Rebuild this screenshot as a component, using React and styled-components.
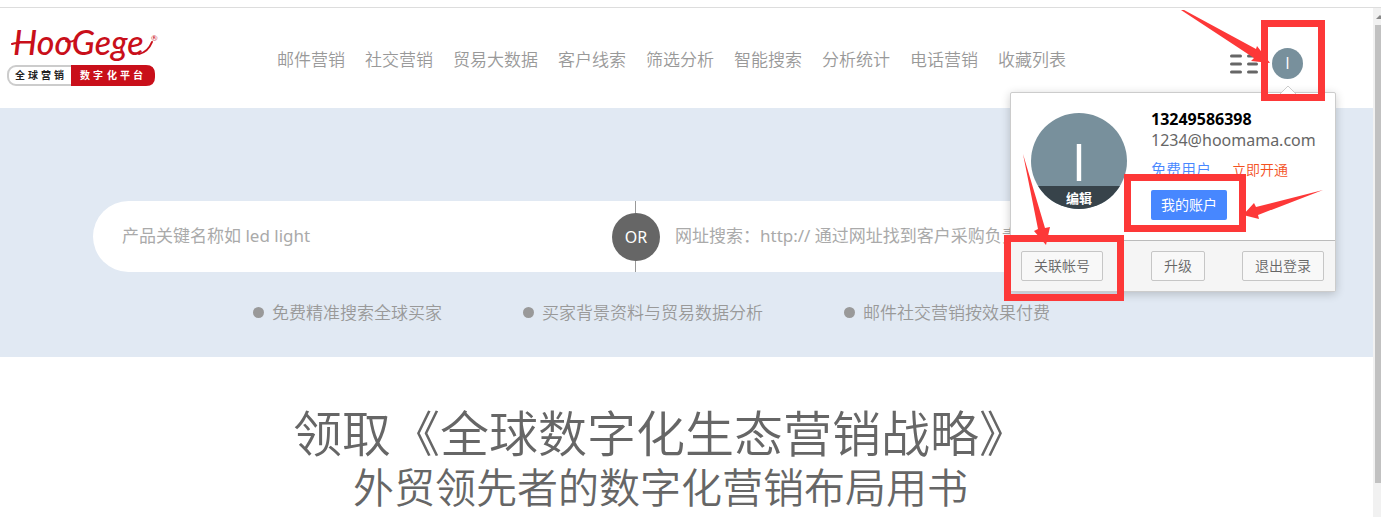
import React from 'react';
import styled, { createGlobalStyle } from 'styled-components';

const GlobalStyle = createGlobalStyle`
  * {
    box-sizing: border-box;
  }
  body {
    margin: 0;
    background: #fff;
    color: #666;
    font-family: 'Noto Sans', 'Noto Sans CJK SC', sans-serif;
    font-weight: 400;
  }
  button,
  input {
    font: inherit;
  }
  a {
    text-decoration: none;
  }
`;

const Page = styled.div`
  min-height: 100vh;
  padding-top: 7px;
  display: flex;
  flex-direction: column;
  overflow: hidden;
`;
const Screen = styled.div`
  flex: 1;
  display: flex;
  border-top: 1px solid #ddd;
`;
const Content = styled.div`
  flex: 1;
  min-width: 0;
`;

const Header = styled.header`
  height: 100px;
  padding: 0 70px 0 7px;
  display: flex;
  align-items: center;
`;
const LogoLink = styled.a`
  display: block;
  height: 80px;
`;
const Nav = styled.nav`
  margin-left: 113px;
  padding-top: 3px;
  display: flex;
  gap: 20px;
`;
const NavLink = styled.a`
  color: #999;
  font-size: 17px;
  font-weight: 350;
  line-height: 24px;
  white-space: nowrap;
`;
const Tools = styled.div`
  margin-left: auto;
  padding-top: 11px;
  display: flex;
  align-items: center;
  gap: 14px;
`;
const MenuButton = styled.button`
  display: flex;
  padding: 0;
  border: 0;
  background: none;
  cursor: pointer;
`;
const User = styled.div`
  position: relative;
  z-index: 2;
`;
const AvatarButton = styled.button`
  display: block;
  width: 31px;
  height: 31px;
  padding: 0;
  border: 0;
  border-radius: 50%;
  background: #78909c;
  color: #fff;
  font-family: 'Open Sans', sans-serif;
  font-size: 16px;
  line-height: 31px;
  cursor: pointer;
`;

const Popup = styled.div`
  position: absolute;
  top: 44px;
  right: -33px;
  width: 326px;
  border: 1px solid #ccc;
  border-radius: 2px;
  background: #fff;
  box-shadow: 0 2px 10px rgba(0, 0, 0, 0.2);
`;
const Caret = styled.svg`
  position: absolute;
  top: -8px;
  right: 39px;
`;
const Profile = styled.div`
  padding: 20px 20px 20px;
  display: flex;
  gap: 24px;
`;
const Portrait = styled.div`
  flex: none;
  width: 96px;
  height: 96px;
  border-radius: 50%;
  overflow: hidden;
  display: flex;
  flex-direction: column;
  background: #78909c;
  color: #fff;
  text-align: center;
`;
const Initial = styled.span`
  height: 73px;
  padding-top: 22px;
  font-family: 'Open Sans', sans-serif;
  font-size: 52px;
  line-height: 51px;
`;
const EditButton = styled.button`
  height: 23px;
  padding: 0;
  border: 0;
  background: #37434a;
  color: #fff;
  font-size: 13px;
  font-weight: 700;
  line-height: 22px;
  cursor: pointer;
`;
const Info = styled.div`
  display: flex;
  flex-direction: column;
  align-items: flex-start;
`;
const Phone = styled.strong`
  color: #000;
  font-size: 16px;
  font-weight: 700;
  line-height: 12px;
`;
const Email = styled.span`
  margin-top: 9px;
  font-size: 16px;
  line-height: 12px;
`;
const Plan = styled.div`
  margin-top: 13px;
  display: flex;
  gap: 21px;
  line-height: 21px;
`;
const FreePlan = styled.span`
  color: #4787ff;
  font-size: 15px;
  font-weight: 350;
`;
const OpenLink = styled.a`
  color: #f4511e;
  font-size: 14px;
  font-weight: 350;
`;
const AccountButton = styled.button`
  height: 30px;
  margin-top: 10px;
  padding: 0 10px 2px;
  border: 0;
  border-radius: 2px;
  background: #4787ff;
  color: #fff;
  font-size: 14px;
  cursor: pointer;
`;
const PopupFooter = styled.div`
  padding: 10px 11px 10px 10px;
  display: grid;
  grid-template-columns: 130px auto 1fr;
  justify-items: start;
  border-top: 1px solid #bbb;
  background: #f5f5f5;
`;
const FooterButton = styled.button`
  height: 30px;
  padding: 0 12px 2px;
  justify-self: ${(props) => (props.$end ? 'end' : 'start')};
  border: 1px solid #c6c6c6;
  border-radius: 2px;
  background: #f8f8f8;
  color: #666;
  font-size: 14px;
  font-weight: 350;
  cursor: pointer;
`;
const Marks = styled.svg`
  position: absolute;
  top: -40px;
  right: -24px;
  pointer-events: none;
`;

const Hero = styled.section`
  padding: 93px 144px 32px 93px;
  background: #e1e9f3;
`;
const SearchBar = styled.form`
  height: 71px;
  display: grid;
  grid-template-columns: 542px 1fr;
  border-radius: 36px;
  background: #fff;
`;
const Field = styled.div`
  position: relative;
  display: flex;
  padding-left: ${(props) => (props.$second ? '39px' : '29px')};
  border-left: ${(props) => (props.$second ? '1px solid #999' : '0')};
`;
const SearchInput = styled.input`
  flex: 1;
  min-width: 0;
  padding: 0 0 2px;
  border: 0;
  outline: 0;
  background: none;
  color: #666;
  font-size: 17px;
  &::placeholder {
    color: #aaa;
    opacity: 1;
  }
`;
const Or = styled.span`
  position: absolute;
  top: 12px;
  left: -24px;
  width: 48px;
  height: 48px;
  border-radius: 50%;
  background: #666;
  color: #fff;
  font-size: 16px;
  line-height: 48px;
  text-align: center;
`;
const Features = styled.ul`
  margin: 28px 0 0;
  padding: 0 0 0 160px;
  display: flex;
  gap: 81px;
  list-style: none;
`;
const Feature = styled.li`
  display: flex;
  align-items: center;
  gap: 8px;
  color: #999;
  font-size: 17px;
  font-weight: 350;
  line-height: 25px;
  white-space: nowrap;
  &::before {
    content: '';
    width: 11px;
    height: 11px;
    border-radius: 50%;
    background: #999;
  }
`;

const Offer = styled.section`
  padding: 49px 52px 0 0;
  text-align: center;
`;
const Title = styled.h1`
  margin: 0;
  font-size: 49px;
  font-weight: 350;
  line-height: 54px;
`;
const Subtitle = styled.h2`
  margin: 0;
  font-size: 41px;
  font-weight: 350;
  line-height: 54px;
`;

const ScrollTrack = styled.div`
  width: 8px;
  padding-left: 2px;
  display: flex;
  flex-direction: column;
  background: #f1f1f1;
`;
const ScrollArrow = styled.svg`
  display: block;
  flex: none;
`;
const ScrollThumb = styled.div`
  height: 90%;
  background: #c1c1c1;
`;

const navItems = [
  '邮件营销',
  '社交营销',
  '贸易大数据',
  '客户线索',
  '筛选分析',
  '智能搜索',
  '分析统计',
  '电话营销',
  '收藏列表',
];

const features = [
  '免费精准搜索全球买家',
  '买家背景资料与贸易数据分析',
  '邮件社交营销按效果付费',
];

function Logo() {
  return (
    <svg width="157" height="80" viewBox="7 18 157 80">
      <g fill="#c90f1a" fontFamily="Lato, sans-serif">
        <text x="13" y="55" fontSize="34" fontStyle="italic" fontWeight="500">
          HooGege
        </text>
        <text x="151" y="41" fontSize="8">
          ®
        </text>
      </g>
      <path
        d="M12 44Q14 43 19 43M66 41Q70 43 75 40M139 54Q148 52 152 42"
        fill="none"
        stroke="#c90f1a"
        strokeWidth="2"
        strokeLinecap="round"
      />
      <rect x="8" y="66" width="146" height="19" rx="8" fill="#fff" stroke="#ccc" strokeWidth="2" />
      <path d="M71 65H146Q155 65 155 74V77Q155 86 146 86H71Z" fill="#c90f1a" />
      <g fontFamily="'Noto Sans CJK SC', sans-serif" fontSize="10" fontWeight="700">
        <text x="15 28 41 54" y="79" fill="#222">
          全球营销
        </text>
        <text x="80 93 107 120 133" y="79" fill="#fff">
          数字化平台
        </text>
      </g>
    </svg>
  );
}

function MenuIcon() {
  return (
    <svg width="28" height="20" viewBox="0 0 28 20">
      <path
        d="M1.500 2H10.500M18.500 2H26.500M1.500 10H10.500M18.500 10H26.500M1.500 18H10.500M18.500 18H26.500"
        stroke="#666"
        strokeWidth="3"
        strokeLinecap="round"
      />
    </svg>
  );
}

function AccountPopup() {
  return (
    <Popup>
      <Caret width="16" height="9" viewBox="0 0 16 9">
        <path d="M0 9L8 1L16 9" fill="#fff" stroke="#ccc" />
      </Caret>
      <Profile>
        <Portrait>
          <Initial>I</Initial>
          <EditButton type="button">编辑</EditButton>
        </Portrait>
        <Info>
          <Phone>13249586398</Phone>
          <Email>1234@hoomama.com</Email>
          <Plan>
            <FreePlan>免费用户</FreePlan>
            <OpenLink href="#open">立即开通</OpenLink>
          </Plan>
          <AccountButton type="button">我的账户</AccountButton>
        </Info>
      </Profile>
      <PopupFooter>
        <FooterButton type="button">关联帐号</FooterButton>
        <FooterButton type="button">升级</FooterButton>
        <FooterButton type="button" $end>
          退出登录
        </FooterButton>
      </PopupFooter>
    </Popup>
  );
}

function RedMarks() {
  return (
    <Marks width="324" height="295" viewBox="1003 8 324 295">
      <g fill="none" stroke="#fd3838" strokeWidth="7">
        <rect x="1264.500" y="23.500" width="57" height="74" />
        <rect x="1127.500" y="177.500" width="115" height="51" />
        <rect x="1007.500" y="238.500" width="113" height="59" />
      </g>
      <g fill="#fd3838">
        <path d="M1181 10L1184 10L1256 49L1257 46L1270 63L1251 61L1254 58Z" />
        <path d="M1323 190L1256 207L1254 203L1243 215L1259 219L1258 215Z" />
        <path d="M1023 154L1045 228L1050 227L1046 245L1034 231L1038 229Z" />
      </g>
    </Marks>
  );
}

export default function App() {
  return (
    <>
      <GlobalStyle />
      <Page>
        <Screen>
          <Content>
            <Header>
              <LogoLink href="#home">
                <Logo />
              </LogoLink>
              <Nav>
                {navItems.map((item) => (
                  <NavLink href="#nav" key={item}>
                    {item}
                  </NavLink>
                ))}
              </Nav>
              <Tools>
                <MenuButton type="button" aria-label="菜单">
                  <MenuIcon />
                </MenuButton>
                <User>
                  <AvatarButton type="button">I</AvatarButton>
                  <AccountPopup />
                  <RedMarks />
                </User>
              </Tools>
            </Header>
            <Hero>
              <SearchBar>
                <Field>
                  <SearchInput
                    type="text"
                    aria-label="产品关键名称"
                    placeholder="产品关键名称如 led light"
                  />
                </Field>
                <Field $second>
                  <Or>OR</Or>
                  <SearchInput
                    type="text"
                    aria-label="网址搜索"
                    placeholder="网址搜索：http:// 通过网址找到客户采购负责人"
                  />
                </Field>
              </SearchBar>
              <Features>
                {features.map((text) => (
                  <Feature key={text}>{text}</Feature>
                ))}
              </Features>
            </Hero>
            <Offer>
              <Title>领取《全球数字化生态营销战略》</Title>
              <Subtitle>外贸领先者的数字化营销布局用书</Subtitle>
            </Offer>
          </Content>
          <ScrollTrack>
            <ScrollArrow width="6" height="17" viewBox="0 0 6 17">
              <path d="M1 11L5 7L9 11Z" fill="#888" />
            </ScrollArrow>
            <ScrollThumb />
          </ScrollTrack>
        </Screen>
      </Page>
    </>
  );
}
